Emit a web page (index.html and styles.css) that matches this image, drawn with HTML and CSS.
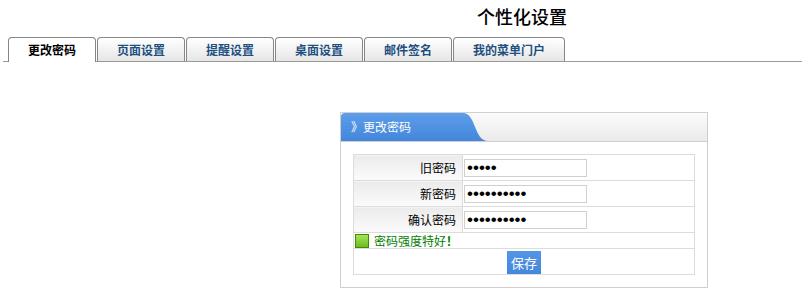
FILE: index.html
```html
<!doctype html>
<html lang="zh">
<head>
<meta charset="utf-8">
<title>个性化设置</title>
<link rel="stylesheet" href="styles.css">
</head>
<body>
<h1 class="title">个性化设置</h1>

<ul class="tabs">
  <li class="on">更改密码</li>
  <li>页面设置</li>
  <li>提醒设置</li>
  <li>桌面设置</li>
  <li>邮件签名</li>
  <li>我的菜单门户</li>
</ul>

<div class="panel">
  <div class="panel-hd">
    <span class="hd-tab">》更改密码</span>
    <svg class="hd-curve" width="26" height="28" viewBox="0 0 26 28">
      <defs>
        <linearGradient id="blue" x1="0" y1="0" x2="0" y2="1">
          <stop offset="0" stop-color="#5d9de9"/>
          <stop offset="1" stop-color="#4386db"/>
        </linearGradient>
      </defs>
      <path d="M0 0 L1 0 C14 0 12 28 26 28 L0 28 Z" fill="url(#blue)"/>
    </svg>
  </div>
  <div class="panel-bd">
    <table class="form">
      <tr>
        <th>旧密码</th>
        <td><input type="password" value="12345"></td>
      </tr>
      <tr>
        <th>新密码</th>
        <td><input type="password" value="1234567890"></td>
      </tr>
      <tr>
        <th>确认密码</th>
        <td><input type="password" value="1234567890"></td>
      </tr>
      <tr class="strength">
        <td colspan="2"><span class="bar"></span>密码强度特好<b>！</b></td>
      </tr>
      <tr class="act">
        <td colspan="2"><button>保存</button></td>
      </tr>
    </table>
  </div>
</div>
</body>
</html>
```

FILE: styles.css
```css
*{box-sizing:border-box;margin:0;padding:0}
body{font-family:"Noto Sans CJK SC","Liberation Sans",sans-serif;font-size:12px;color:#000;background:#fff}

.title{font-size:18px;font-weight:500;line-height:20px;padding:6px 0 0 477px;height:37px}

.tabs{list-style:none;display:flex;align-items:flex-end;gap:1px;height:25px;margin-left:3px;padding-left:5px;border-bottom:1px solid #9a9a9a}
.tabs li{height:24px;line-height:23px;padding:0 19px;border:1px solid #868686;border-bottom:none;border-radius:4px 4px 0 0;background:linear-gradient(#fff,#e6e6e6);color:#1d4f7f;font-weight:bold;white-space:nowrap}
.tabs li.on{height:25px;margin-bottom:-1px;background:#fff;color:#000}

.panel{width:368px;margin:50px 0 0 340px;border:1px solid #cfcfcf}
.panel-hd{display:flex;height:29px;border-bottom:1px solid #cfcfcf;background:linear-gradient(#fbfbfb,#ebebeb)}
.hd-tab{width:121px;height:28px;line-height:27px;padding-left:10px;color:#fff;background:linear-gradient(#5d9de9,#4386db);border-radius:4px 0 0 0;white-space:nowrap}
.hd-curve{display:block;flex:none}
.panel-bd{padding:12px}

.form{width:100%;border-collapse:collapse}
.form th,.form td{border:1px solid #dcdcdc;height:26px}
.form th{width:109px;padding-right:6px;text-align:right;font-weight:normal;background:linear-gradient(#ebebeb,#fbfbfb)}
.form td{padding-left:1px}
.form input{display:block;width:123px;height:18px;border:1px solid #d0d0d0;padding:0 2px;font-family:"Liberation Sans",sans-serif;font-size:17px;line-height:16px;color:#000}

.strength td{height:16px;line-height:14px;color:#008000;padding-left:1px}
.strength b{font-weight:bold}
.strength .bar{display:inline-block;vertical-align:top;width:14px;height:14px;margin-right:5px;border:1px solid #3f8a0a;background:linear-gradient(#a7e35c,#6cbd1d)}

.act td{text-align:center;height:26px;padding:1px 0 0}
.act button{display:block;margin:0 auto;width:34px;height:23px;border:none;background:linear-gradient(#5396e6,#4486dc);color:#fff;font-family:inherit;font-size:13px}
```
